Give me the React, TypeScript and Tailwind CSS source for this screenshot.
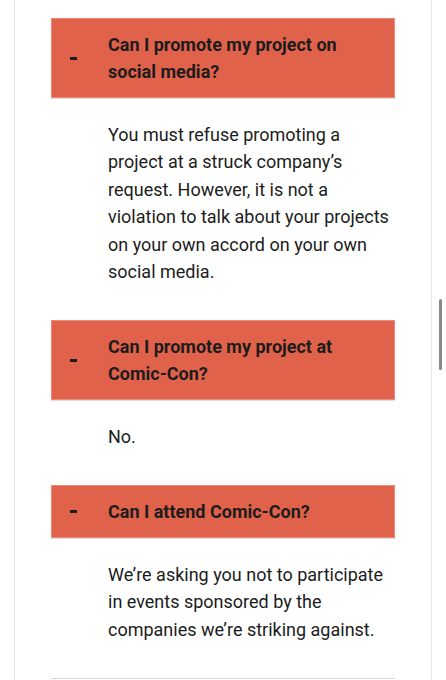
import React from "react"

type Faq = {
  q: string
  a: string
}

const faqs: Faq[] = [
  {
    q: "Can I promote my project on social media?",
    a: "You must refuse promoting a project at a struck company’s request. However, it is not a violation to talk about your projects on your own accord on your own social media.",
  },
  { q: "Can I promote my project at Comic-Con?", a: "No." },
  {
    q: "Can I attend Comic-Con?",
    a: "We’re asking you not to participate in events sponsored by the companies we’re striking against.",
  },
]

export default function App() {
  return (
    <div className="relative h-[680px] w-[446px] overflow-hidden bg-white font-['Roboto',sans-serif] text-[#1c1c1c]">
      <div className="ml-[14px] w-[418px] min-h-[680px] border-x border-[#e6e6e6] px-[36px] pt-[18px]">
        {faqs.map((f, i) => (
          <div key={f.q}>
            <div className="flex items-center bg-[#e1624a] border border-[#e88a77] py-[12px] pl-[18px] pr-[20px] shadow-[0_1px_1px_rgba(0,0,0,0.12)]">
              <span className="w-[38px] shrink-0 flex items-center pt-[1px]">
                <span className="block h-[3px] w-[7px] bg-[#1c1c1c]" />
              </span>
              <h3 className="text-[18px] font-bold leading-[27px]">{f.q}</h3>
            </div>
            <p className={`pl-[57px] pr-[2px] pt-[23px] text-[18px] leading-[27.4px] ${i === 1 ? "pb-[34px]" : "pb-[35px]"}`}>{f.a}</p>
          </div>
        ))}
        <div className="border-t border-[#d9d9d9]" />
      </div>
      {/* scrollbar */}
      <div className="absolute left-[439px] top-[299px] h-[71px] w-[3px] rounded-full bg-[#8a8a8a]" />
    </div>
  )
}
